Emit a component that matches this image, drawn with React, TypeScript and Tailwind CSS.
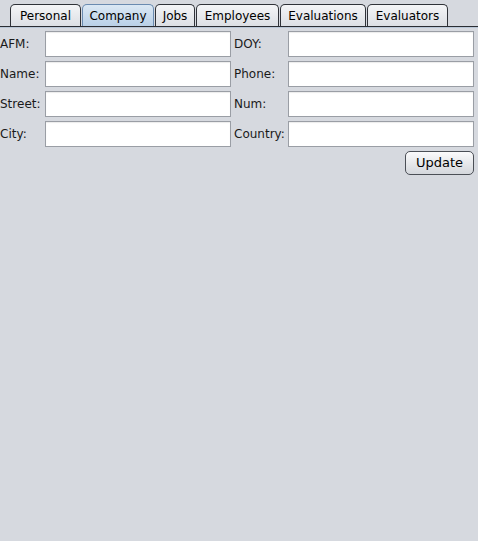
const tabs = [
  { name: "Personal", w: "w-[71px]" },
  { name: "Company", w: "w-[72px]" },
  { name: "Jobs", w: "w-[40px]" },
  { name: "Employees", w: "w-[83px]" },
  { name: "Evaluations", w: "w-[86px]" },
  { name: "Evaluators", w: "w-[81px]" },
];

const rows: [string, string][] = [
  ["AFM:", "DOY:"],
  ["Name:", "Phone:"],
  ["Street:", "Num:"],
  ["City:", "Country:"],
];

function Field() {
  return (
    <div className="h-[26px] w-[186px] border border-[#9a9ea5] bg-white shadow-[inset_0_1px_1px_rgba(0,0,0,0.08)]" />
  );
}

export default function App() {
  return (
    <div className="h-[541px] w-[478px] bg-[#d6d9df] text-[12px] text-[#1a1a1a] font-['DejaVu_Sans',sans-serif]">
      <div className="flex gap-px pl-[10px] pt-[4px]">
        {tabs.map((t) =>
          t.name === "Company" ? (
            <div
              key={t.name}
              className={`${t.w} h-[22px] flex items-center justify-center rounded-t-[5px] border border-b-0 border-[#6a8bb0] bg-gradient-to-b from-[#dbe8f4] to-[#b9d0e7] text-black`}
            >
              {t.name}
            </div>
          ) : (
            <div
              key={t.name}
              className={`${t.w} h-[22px] flex items-center justify-center rounded-t-[5px] border border-b-0 border-[#2f3238] bg-gradient-to-b from-[#f4f5f7] to-[#dcdfe4] text-black`}
            >
              {t.name}
            </div>
          )
        )}
      </div>
      <div className="h-px bg-[#2a2d33]" />
      <div className="h-px bg-[#b9c6d6]" />
      <div className="flex flex-col gap-[4px] pt-[3px]">
        {rows.map(([a, b]) => (
          <div key={a} className="flex items-center">
            <div className="w-[45px]">{a}</div>
            <Field />
            <div className="w-[57px] pl-[3px]">{b}</div>
            <Field />
          </div>
        ))}
      </div>
      <div className="flex justify-end pr-[4px] pt-[4px]">
        <button className="h-[24px] w-[69px] rounded-[5px] border border-[#4b4f56] bg-gradient-to-b from-[#fbfbfc] to-[#d4d7dc] text-[13px] text-black">
          Update
        </button>
      </div>
    </div>
  );
}
